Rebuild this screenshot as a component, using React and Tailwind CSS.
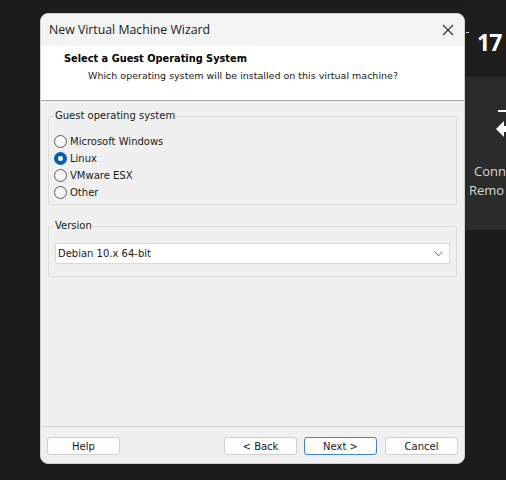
import React from 'react'

const ui = { fontFamily: '"DejaVu Sans", Verdana, sans-serif' }
const title = { fontFamily: '"Open Sans", "Noto Sans", sans-serif' }

function Radio({ label, checked }) {
  return (
    <div className="flex items-center h-[17px]">
      {checked ? (
        <span className="w-[13px] h-[13px] rounded-full bg-[#005fb8] flex items-center justify-center shrink-0">
          <span className="w-[5px] h-[5px] rounded-full bg-white" />
        </span>
      ) : (
        <span className="w-[13px] h-[13px] rounded-full border border-[#5c5c5c] bg-[#f7f7f7] shrink-0" />
      )}
      <span className="ml-[3px] text-[10px] text-[#1a1a1a]">{label}</span>
    </div>
  )
}

function Group({ label, children, className }) {
  return (
    <div className={'relative border border-[#dcdcdc] rounded-[2px] ' + className}>
      <span className="absolute -top-[8px] left-[5px] px-[1px] bg-[#f0f0f0] text-[10px] leading-[14px] text-[#1a1a1a]">
        {label}
      </span>
      {children}
    </div>
  )
}

function Btn({ children, primary }) {
  return (
    <button
      className={
        'w-[73px] h-[18px] rounded-[3px] bg-[#fdfdfd] text-[10px] text-[#1a1a1a] flex items-center justify-center border ' +
        (primary ? 'border-[#3a86c8]' : 'border-[#d0d0d0]')
      }
    >
      {children}
    </button>
  )
}

export default function App() {
  return (
    <div className="relative w-[506px] h-[480px] bg-[#1c1c1c] overflow-hidden" style={ui}>
      {/* desktop behind the wizard */}
      <div className="absolute left-[465px] top-0 w-[41px] h-[77px] bg-[#1e1e1e]">
        <span className="absolute left-[1px] top-[32px] w-[3px] h-[1px] bg-[#cfcfcf]" />
        <span className="absolute left-[12px] top-[28px] text-[23px] leading-[28px] font-bold tracking-[-1px] text-white" style={title}>17</span>
      </div>
      <div className="absolute left-[465px] top-[77px] w-[41px] h-[153px] bg-[#2b2b2b] text-[#d6d6d6]" style={title}>
        <span className="absolute left-[33px] top-[33px] w-[10px] h-[2px] bg-white" />
        <svg className="absolute left-[30px] top-[42px]" width="14" height="20" viewBox="0 0 14 20">
          <path d="M1 10 L9 2 L9 7 L14 7 L14 13 L9 13 L9 18 Z" fill="white" />
        </svg>
        <div className="absolute left-[9px] top-[85px] text-[13px] leading-[19px] whitespace-nowrap">Conn</div>
        <div className="absolute left-[4px] top-[104px] text-[13px] leading-[19px] whitespace-nowrap">Remo</div>
      </div>

      {/* wizard window */}
      <div className="absolute left-[40px] top-[13px] w-[425px] h-[451px] rounded-[8px] overflow-hidden bg-[#f0f0f0] border border-[#cfcfcf] flex flex-col">
        <div className="h-[32px] bg-[#f3f3f3] flex items-center justify-between pl-[8px] pr-[10px] shrink-0">
          <span className="text-[12.3px] text-[#1a1a1a]" style={title}>New Virtual Machine Wizard</span>
          <svg width="12" height="12" viewBox="0 0 12 12">
            <path d="M1 1 L11 11 M11 1 L1 11" stroke="#333" strokeWidth="1.2" />
          </svg>
        </div>
        <div className="h-[55px] bg-white border-b border-[#a0a0a0] pl-[23px] pt-[6px] shrink-0">
          <div className="text-[9.8px] font-bold text-black leading-[14px]">Select a Guest Operating System</div>
          <div className="text-[9.5px] text-[#1a1a1a] leading-[14px] mt-[3px] pl-[24px]">
            Which operating system will be installed on this virtual machine?
          </div>
        </div>

        <div className="flex-1 flex flex-col px-[7px] pt-[15px]">
          <Group label="Guest operating system" className="h-[89px] pt-[16px] pl-[5px]">
            <Radio label="Microsoft Windows" />
            <Radio label="Linux" checked />
            <Radio label="VMware ESX" />
            <Radio label="Other" />
          </Group>
          <Group label="Version" className="mt-[21px] h-[51px] pt-[16px] px-[6px]">
            <div className="h-[21px] bg-white border border-[#d9d9d9] rounded-[2px] flex items-center justify-between pl-[2px] pr-[6px]">
              <span className="text-[10px] text-[#1a1a1a]">Debian 10.x 64-bit</span>
              <svg width="9" height="6" viewBox="0 0 9 6">
                <path d="M0.5 0.8 L4.5 4.8 L8.5 0.8" stroke="#606060" strokeWidth="1" fill="none" />
              </svg>
            </div>
          </Group>
        </div>

        <div className="h-[37px] border-t border-[#d4d4d4] flex items-start pt-[10px] px-[6px] shrink-0">
          <Btn>Help</Btn>
          <div className="flex-1" />
          <Btn>&lt; Back</Btn>
          <div className="w-[7px]" />
          <Btn primary>Next &gt;</Btn>
          <div className="w-[8px]" />
          <Btn>Cancel</Btn>
        </div>
      </div>
    </div>
  )
}
